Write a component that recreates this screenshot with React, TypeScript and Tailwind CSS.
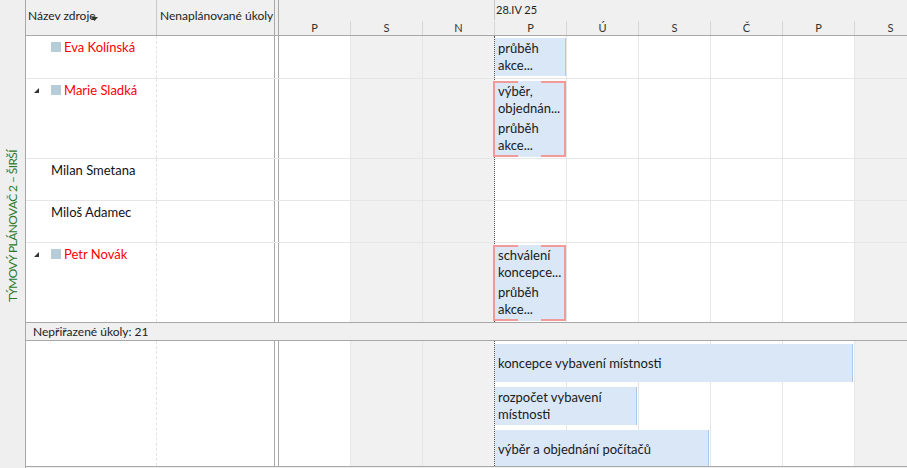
import React from "react";

type Resource = {
  name: string;
  red?: boolean;
  expand?: boolean;
  height: string;
  tasks?: string[][];
  conflict?: boolean;
};

const resources: Resource[] = [
  { name: "Eva Kolínská", red: true, height: "h-[43px] border-b", tasks: [["průběh", "akce..."]] },
  {
    name: "Marie Sladká",
    red: true,
    expand: true,
    height: "h-[80px] border-b",
    conflict: true,
    tasks: [
      ["výběr,", "objednán..."],
      ["průběh", "akce..."],
    ],
  },
  { name: "Milan Smetana", height: "h-[42px] border-b" },
  { name: "Miloš Adamec", height: "h-[42px] border-b" },
  {
    name: "Petr Novák",
    red: true,
    expand: true,
    height: "h-[79px]",
    conflict: true,
    tasks: [
      ["schválení", "koncepce..."],
      ["průběh", "akce..."],
    ],
  },
];

const days = ["P", "S", "N", "P", "Ú", "S", "Č", "P", "S"];
const weekend = [false, true, true, false, false, false, false, false, true];

const unassigned = [
  { label: "koncepce vybavení místnosti", w: "w-[358px]" },
  { label: "rozpočet vybavení místnosti", w: "w-[142px]" },
  { label: "výběr a objednání počítačů", w: "w-[214px]" },
];

function DayColumns() {
  return (
    <div className="flex h-full">
      {days.map((d, i) => (
        <div
          key={i}
          className={`w-[72px] h-full shrink-0 border-r ${
            i === 2 ? "border-dotted border-[#555]" : "border-[#e6e6e6]"
          } ${weekend[i] ? "bg-[#f1f1f1]" : "bg-white"}`}
        />
      ))}
    </div>
  );
}

function TaskText({ lines }: { lines: string[] }) {
  return (
    <div className="overflow-hidden">
      {lines.map((l) => (
        <div key={l} className="whitespace-nowrap">
          {l}
        </div>
      ))}
    </div>
  );
}

function ResourceRow({ r }: { r: Resource }) {
  return (
    <div className={`flex ${r.height} border-[#e6e6e6]`}>
      <div className="w-[131px] shrink-0 border-r border-dashed border-[#e2e2e2] pl-[8px] pt-[3px] flex items-start text-[13px] leading-[16px]">
        <div className="w-[17px] h-[16px] flex items-center">
          {r.expand && (
            <svg width="5" height="5" viewBox="0 0 5 5">
              <polygon points="5,0 5,5 0,5" fill="#333" />
            </svg>
          )}
        </div>
        {r.red && <div className="w-[10px] h-[10px] mt-[3px] mr-[3px] bg-[#b6cdd8]" />}
        <span className={r.red ? "text-[#ff0000]" : "text-[#111]"}>{r.name}</span>
      </div>
      <div className="w-[118px] shrink-0 border-r border-[#a8a8a8]" />
      <div className="w-[4px] shrink-0 border-r border-[#a8a8a8]" />
      <div className="relative flex-1 overflow-hidden">
        <DayColumns />
        {r.tasks && !r.conflict && (
          <div className="absolute left-[216px] top-[2px] w-[71px] h-[38px] bg-[#d9e7f7] border-r border-[#a9c8ec] pl-[3px] pt-[2px] text-[13px] leading-[17px] text-[#1a1a1a]">
            <TaskText lines={r.tasks[0]} />
          </div>
        )}
        {r.tasks && r.conflict && (
          <div className="absolute left-[214px] top-[2px] w-[73px] h-[76px] bg-[#d9e7f7] border-2 border-[#f19a9a] pl-[3px] pt-[0px] text-[13px] leading-[17px] text-[#1a1a1a] flex flex-col gap-[3px]">
            <span className="absolute -top-[2px] left-[23px] w-[23px] h-[2px] bg-[#d9e7f7]" />
            <span className="absolute -bottom-[2px] left-[23px] w-[23px] h-[2px] bg-[#d9e7f7]" />
            {r.tasks.map((t, i) => (
              <TaskText key={i} lines={t} />
            ))}
          </div>
        )}
      </div>
    </div>
  );
}

export default function App() {
  return (
    <div className="flex w-[907px] h-[468px] overflow-hidden bg-white text-[#1a1a1a] [font-family:Lato,'Noto_Sans',sans-serif]">
      {/* side caption */}
      <div className="w-[26px] shrink-0 h-full bg-[#efefef] border-r border-[#a8a8a8] flex flex-col items-center pt-[150px]">
        <div className="[writing-mode:vertical-rl] rotate-180 text-[12px] leading-[14px] tracking-[-0.6px] text-[#2a7a2a] whitespace-nowrap">
          TÝMOVÝ PLÁNOVAČ 2 – ŠIRŠÍ
        </div>
      </div>

      <div className="flex-1 flex flex-col min-w-0">
        {/* header */}
        <div className="flex h-[36px] shrink-0 bg-[#f0f0f0] border-b border-[#a8a8a8] text-[12px] text-[#222]">
          <div className="w-[131px] shrink-0 border-r border-[#c8c8c8] pl-[2px] pt-[7px] flex items-start">
            <span>Název zdroje</span>
            <svg width="7" height="4" viewBox="0 0 7 4" className="-ml-[5px] mt-[10px]">
              <polygon points="0,0 7,0 3.5,4" fill="#333" />
            </svg>
          </div>
          <div className="w-[118px] shrink-0 border-r border-[#a8a8a8] pl-[3px] pt-[7px] whitespace-nowrap overflow-hidden">
            Nenaplánované úkoly
          </div>
          <div className="w-[4px] shrink-0 border-r border-[#a8a8a8]" />
          <div className="flex-1 flex flex-col overflow-hidden">
            <div className="h-[20px] shrink-0 flex">
              <div className="ml-[215px] border-l border-[#c8c8c8] pl-[1px] pt-[3px] text-[11px] leading-[14px] whitespace-nowrap">
                28.IV 25
              </div>
            </div>
            <div className="flex flex-1">
              {days.map((d, i) => (
                <div
                  key={i}
                  className="w-[72px] shrink-0 border-r border-[#d6d6d6] text-center text-[11px] leading-[14px] text-[#333] mt-[1px]"
                >
                  {d}
                </div>
              ))}
            </div>
          </div>
        </div>

        {resources.map((r) => (
          <ResourceRow key={r.name} r={r} />
        ))}

        {/* unassigned bar */}
        <div className="h-[19px] shrink-0 bg-[#f0f0f0] border-y border-[#a8a8a8] pl-[7px] text-[12px] leading-[17px] text-[#222]">
          Nepřiřazené úkoly: 21
        </div>

        {/* unassigned tasks */}
        <div className="flex h-[125px] shrink-0">
          <div className="w-[131px] shrink-0 border-r border-dashed border-[#e2e2e2]" />
          <div className="w-[118px] shrink-0 border-r border-[#a8a8a8]" />
          <div className="w-[4px] shrink-0 border-r border-[#a8a8a8]" />
          <div className="relative flex-1 overflow-hidden">
            <DayColumns />
            <div className="absolute left-[216px] top-[3px] flex flex-col gap-[5px] text-[13px] leading-[17px] text-[#1a1a1a]">
              {unassigned.map((t) => (
                <div
                  key={t.label}
                  className={`${t.w} h-[38px] bg-[#d9e7f7] border-r border-[#a9c8ec] pl-[3px] pr-[20px] flex items-center`}
                >
                  {t.label}
                </div>
              ))}
            </div>
          </div>
        </div>

        {/* scroll strip */}
        <div className="h-[2px] shrink-0 bg-[#f0f0f0] border-t border-[#a8a8a8]" />
      </div>
    </div>
  );
}
